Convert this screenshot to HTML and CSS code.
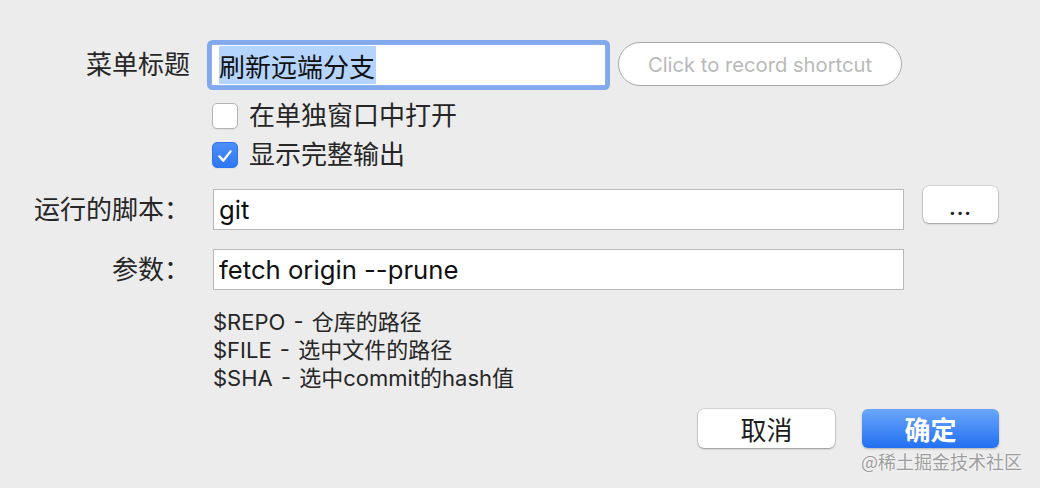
FILE: index.html
```html
<!DOCTYPE html>
<html lang="zh-CN">
<head>
<meta charset="utf-8">
<link rel="stylesheet" href="styles.css">
</head>
<body>
<div class="dialog">
  <div class="row row-title">
    <div class="label">菜单标题</div>
    <div class="field field-focus"><span class="sel">刷新远端分支</span></div>
    <div class="shortcut">Click to record shortcut</div>
  </div>
  <div class="row row-check1">
    <div class="spacer"></div>
    <div class="check"><span class="box"></span><span class="check-text">在单独窗口中打开</span></div>
  </div>
  <div class="row row-check2">
    <div class="spacer"></div>
    <div class="check"><span class="box box-on"><svg viewBox="0 0 26 26" width="26" height="26"><path d="M7 13.5 L11.2 18 L19 8" fill="none" stroke="#fff" stroke-width="2.6" stroke-linecap="round" stroke-linejoin="round"/></svg></span><span class="check-text">显示完整输出</span></div>
  </div>
  <div class="row row-script">
    <div class="label">运行的脚本：</div>
    <div class="field field-wide">git</div>
    <div class="dots-btn">...</div>
  </div>
  <div class="row row-args">
    <div class="label">参数：</div>
    <div class="field field-wide">fetch origin --prune</div>
  </div>
  <div class="row row-help">
    <div class="spacer"></div>
    <div class="help">
      <div>$REPO - 仓库的路径</div>
      <div>$FILE - 选中文件的路径</div>
      <div>$SHA - 选中commit的hash值</div>
    </div>
  </div>
  <div class="row row-buttons">
    <div class="btn btn-cancel">取消</div>
    <div class="btn btn-ok">确定</div>
  </div>
  <div class="watermark">@稀土掘金技术社区</div>
</div>
</body>
</html>
```
FILE: styles.css
```css
* { box-sizing: border-box; }
html, body { margin: 0; padding: 0; }
body {
  background: #ececec;
  font-family: "Inter", "Noto Sans CJK SC", sans-serif;
  color: #262626;
}
.dialog {
  position: relative;
  width: 1040px;
  height: 488px;
  padding-top: 44px;
  overflow: hidden;
}
.row {
  display: flex;
  align-items: center;
}
.label, .spacer {
  width: 190px;
  flex: none;
  text-align: right;
  font-size: 26px;
  line-height: 30px;
  color: #262626;
}
.spacer { height: 1px; }
.row-title { height: 42px; }
.field {
  background: #fff;
  border: 1px solid #b9b9b9;
  font-size: 26px;
  color: #111;
  display: flex;
  align-items: center;
}
.field-focus {
  margin-left: 21px;
  width: 395px;
  height: 42px;
  border: 1px solid #8fb0ec;
  border-radius: 2px;
  box-shadow: 0 0 0 4px #82a8ee;
  padding: 1px 0 1px 7px;
  align-items: stretch;
}
.sel {
  background: #b4d4fd;
  display: flex;
  align-items: center;
  color: #111;
  padding-right: 1px;
}
.shortcut {
  margin-left: 12px;
  width: 284px;
  height: 44px;
  border: 1px solid #a9a9a9;
  border-radius: 22px;
  background: #fff;
  color: #b9b9b9;
  font-size: 20.2px;
  display: flex;
  align-items: center;
  justify-content: center;
  margin-top: -2px;
}
.row-check1 { margin-top: 17px; height: 26px; }
.row-check2 { margin-top: 13px; height: 26px; }
.check {
  margin-left: 22px;
  display: flex;
  align-items: center;
}
.box {
  width: 26px;
  height: 26px;
  border: 1px solid #b3b3b3;
  border-radius: 5px;
  background: #fff;
  flex: none;
  box-shadow: 0 1px 1px rgba(0,0,0,0.06);
}
.box-on {
  background: linear-gradient(#4d8ff8, #2f77f2);
  border-color: #2e74ea;
  display: flex;
}
.check-text {
  margin-left: 11px;
  font-size: 26px;
  line-height: 30px;
  color: #262626;
}
.row-script { margin-top: 21px; height: 41px; align-items: flex-start; }
.row-args { margin-top: 19px; height: 41px; }
.row-script .label, .row-args .label { align-self: center; }
.field-wide {
  margin-left: 23px;
  width: 691px;
  height: 41px;
  padding-left: 5px;
  font-size: 25.7px;
}
.dots-btn {
  margin-left: 19px;
  margin-top: -3px;
  width: 75px;
  height: 37px;
  background: #fff;
  border-radius: 6px;
  box-shadow: 0 0 0 0.5px rgba(0,0,0,0.18), 0 1px 2px rgba(0,0,0,0.28);
  font-size: 20px;
  font-weight: bold;
  color: #222;
  display: flex;
  align-items: center;
  justify-content: center;
  padding-top: 6px;
  letter-spacing: 1px;
}
.row-help { margin-top: 18px; align-items: flex-start; }
.help {
  margin-left: 23px;
  font-size: 22px;
  line-height: 28px;
  color: #262626;
  word-spacing: 2px;
}
.row-buttons {
  margin-top: 17px;
  justify-content: flex-end;
  padding-right: 41px;
}
.btn {
  width: 137px;
  height: 39px;
  border-radius: 6px;
  font-size: 26px;
  display: flex;
  align-items: center;
  justify-content: center;
}
.btn-cancel {
  background: #fff;
  color: #1c1c1c;
  box-shadow: 0 0 0 0.5px rgba(0,0,0,0.18), 0 1px 2px rgba(0,0,0,0.3);
}
.btn-ok {
  margin-left: 27px;
  background: linear-gradient(#6aa6fb, #2270f2);
  color: #fff;
  font-weight: bold;
  box-shadow: 0 1px 2px rgba(0,0,0,0.25);
}
.watermark {
  position: absolute;
  right: 18px;
  bottom: 15px;
  font-size: 18px;
  color: rgba(140,140,140,0.85);
  font-family: "Noto Sans CJK SC", sans-serif;
  line-height: 24px;
  text-shadow: 0 0 2px #fff;
}
```
